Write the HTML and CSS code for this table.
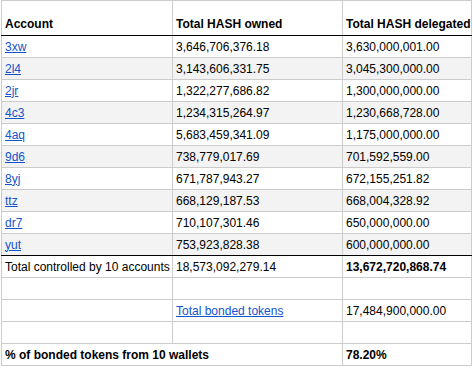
FILE: index.html
```html
<!DOCTYPE html>
<html lang="en">

<head>
    <meta charset="UTF-8">
    <meta name="viewport" content="width=device-width, initial-scale=1.0">
    <title>HASH delegation</title>
    <link rel="stylesheet" href="styles.css">
</head>

<body>
    <table class="sheet">
        <colgroup>
            <col class="col-account">
            <col class="col-owned">
            <col class="col-delegated">
        </colgroup>
        <thead>
            <tr class="head">
                <th>Account</th>
                <th>Total HASH owned</th>
                <th>Total HASH delegated</th>
            </tr>
        </thead>
        <tbody>
            <tr><td><a href="#">3xw</a></td><td>3,646,706,376.18</td><td>3,630,000,001.00</td></tr>
            <tr class="alt"><td><a href="#">2l4</a></td><td>3,143,606,331.75</td><td>3,045,300,000.00</td></tr>
            <tr><td><a href="#">2jr</a></td><td>1,322,277,686.82</td><td>1,300,000,000.00</td></tr>
            <tr class="alt"><td><a href="#">4c3</a></td><td>1,234,315,264.97</td><td>1,230,668,728.00</td></tr>
            <tr><td><a href="#">4aq</a></td><td>5,683,459,341.09</td><td>1,175,000,000.00</td></tr>
            <tr class="alt"><td><a href="#">9d6</a></td><td>738,779,017.69</td><td>701,592,559.00</td></tr>
            <tr><td><a href="#">8yj</a></td><td>671,787,943.27</td><td>672,155,251.82</td></tr>
            <tr class="alt"><td><a href="#">ttz</a></td><td>668,129,187.53</td><td>668,004,328.92</td></tr>
            <tr><td><a href="#">dr7</a></td><td>710,107,301.46</td><td>650,000,000.00</td></tr>
            <tr class="alt last"><td><a href="#">yut</a></td><td>753,923,828.38</td><td>600,000,000.00</td></tr>
            <tr><td>Total controlled by 10 accounts</td><td>18,573,092,279.14</td><td class="strong">13,672,720,868.74</td></tr>
            <tr><td></td><td></td><td></td></tr>
            <tr><td></td><td><a href="#">Total bonded tokens</a></td><td>17,484,900,000.00</td></tr>
            <tr><td></td><td></td><td></td></tr>
            <tr><td class="strong" colspan="2">% of bonded tokens from 10 wallets</td><td class="strong">78.20%</td></tr>
        </tbody>
    </table>
</body>

</html>
```

FILE: styles.css
```css
/* Sheet look */
body {
    margin: 0;
    padding: 0 0 0 1px;
    background-color: #ffffff;
    font-family: Arial, "Liberation Sans", sans-serif;
    font-size: 12px;
    color: #000;
}

.sheet {
    border-collapse: collapse;
    table-layout: fixed;
    width: 470px;
}

.col-account {
    width: 171px;
}

.col-owned {
    width: 170px;
}

.col-delegated {
    width: 129px;
}

.sheet th,
.sheet td {
    border: 1px solid #cccccc;
    height: 21px;
    padding: 0 3px;
    white-space: nowrap;
    overflow: hidden;
    text-align: left;
    vertical-align: middle;
}

/* Header row */
.head th {
    height: 30px;
    font-weight: bold;
    vertical-align: bottom;
    padding-bottom: 4px;
    border-bottom: 1px solid #000;
}

.alt td {
    background-color: #f3f3f3;
}

.last td {
    border-bottom: 1px solid #000;
}

.strong {
    font-weight: bold;
}

a {
    color: #1155cc;
    text-decoration: underline;
}
```
